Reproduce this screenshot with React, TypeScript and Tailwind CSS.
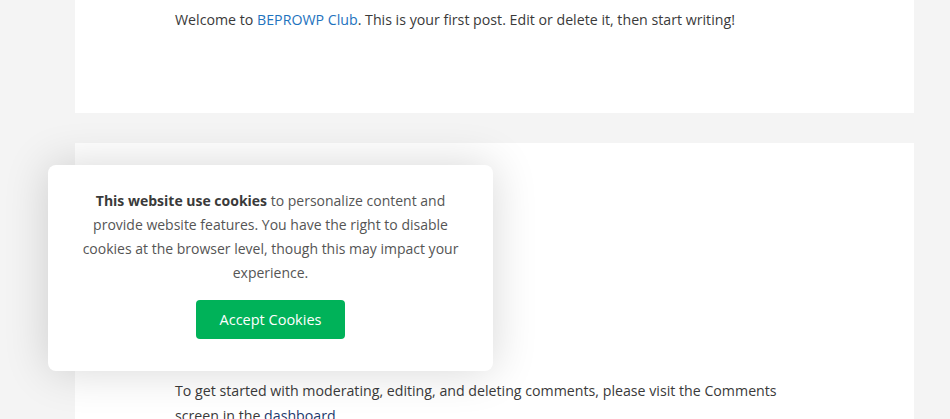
export default function App() {
  return (
    <div
      className="relative h-[419px] w-[950px] overflow-hidden bg-[#f4f4f4] text-[#3a3a3a]"
      style={{ fontFamily: '"Open Sans", "Noto Sans", sans-serif' }}
    >
      {/* Post card */}
      <div className="ml-[75px] w-[839px] bg-white pl-[100px] pt-[8px] h-[113px]">
        <p className="text-[14.2px] leading-[24px]">
          Welcome to <a className="text-[#1e73be]">BEPROWP Club</a>. This is your first post. Edit or delete it, then start writing!
        </p>
      </div>

      <div className="h-[30px]" />

      {/* Comment card */}
      <div className="ml-[75px] w-[839px] bg-white pl-[100px] pt-[235px] h-[300px]">
        <p className="w-[620px] text-[14.2px] leading-[25px]">
          To get started with moderating, editing, and deleting comments, please visit the Comments screen in the{' '}
          <a className="text-[#1e3a6e]">dashboard</a>.
        </p>
      </div>

      {/* Cookie banner */}
      <div className="absolute bottom-[48px] left-[48px] w-[445px] rounded-lg bg-white px-[30px] pt-[24px] pb-[32px] text-center shadow-[0_0_45px_rgba(0,0,0,0.16)]">
        <p className="text-[14px] leading-[24px] text-[#555]">
          <strong className="font-bold text-[#3a3a3a]">This website use cookies</strong> to personalize content and provide website features. You have the right to disable cookies at the browser level, though this may impact your experience.
        </p>
        <button className="mt-[15px] h-[39px] w-[149px] rounded-[4px] bg-[#00b259] text-[14.5px] text-white">
          Accept Cookies
        </button>
      </div>
    </div>
  );
}
